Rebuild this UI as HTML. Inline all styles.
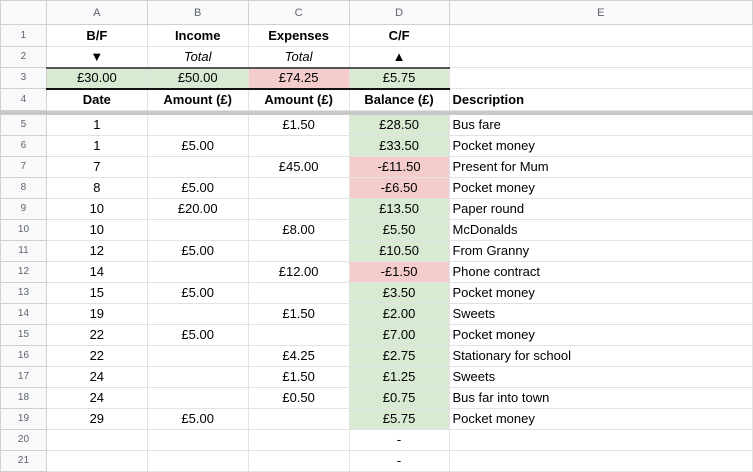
<!DOCTYPE html>
<html><head><style>
*{margin:0;padding:0;box-sizing:border-box}
body{width:753px;height:471px;overflow:hidden;background:#fff;font-family:"Liberation Sans",Arial,sans-serif}
table{border-collapse:collapse;table-layout:fixed;position:absolute;left:0;top:0}
td{border:1px solid #e2e2e2;font-size:13px;color:#000;white-space:nowrap;overflow:hidden;padding:0 3px;text-align:center;line-height:18px}
td.h{background:#f8f9fa;color:#5f6368;font-size:10px;border-color:#d0d0d0}
tr.ch td{font-size:11px;height:24px}
td.l{text-align:left}
.b{font-weight:bold}.i{font-style:italic}
.g{background:#d9ead3}.r{background:#f4cccc}
tr.r3 td.x{border-top:2px solid #555;border-bottom:2px solid #111}
tr.sep td{height:4px;padding:0;background:#c8c8c8;border-color:#c8c8c8}
tr.n td{height:21px}
</style></head><body>
<table>
<colgroup><col style="width:46px"><col style="width:101px"><col style="width:101px"><col style="width:101px"><col style="width:100px"><col style="width:304px"></colgroup>
<tr class="ch"><td class="h"></td><td class="h">A</td><td class="h">B</td><td class="h">C</td><td class="h">D</td><td class="h">E</td></tr>
<tr style="height:22px"><td class="h">1</td><td class="b">B/F</td><td class="b">Income</td><td class="b">Expenses</td><td class="b">C/F</td><td></td></tr>
<tr style="height:21px"><td class="h">2</td><td>▼</td><td class="i">Total</td><td class="i">Total</td><td>▲</td><td></td></tr>
<tr class="r3" style="height:21px"><td class="h">3</td><td class="x g">£30.00</td><td class="x g">£50.00</td><td class="x r">£74.25</td><td class="x g">£5.75</td><td></td></tr>
<tr style="height:22px"><td class="h">4</td><td class="b">Date</td><td class="b">Amount (£)</td><td class="b">Amount (£)</td><td class="b">Balance (£)</td><td class="l b">Description</td></tr>
<tr class="sep"><td></td><td></td><td></td><td></td><td></td><td></td></tr>
<tr class="n"><td class="h">5</td><td>1</td><td></td><td>£1.50</td><td class="g">£28.50</td><td class="l">Bus fare</td></tr>
<tr class="n"><td class="h">6</td><td>1</td><td>£5.00</td><td></td><td class="g">£33.50</td><td class="l">Pocket money</td></tr>
<tr class="n"><td class="h">7</td><td>7</td><td></td><td>£45.00</td><td class="r">-£11.50</td><td class="l">Present for Mum</td></tr>
<tr class="n"><td class="h">8</td><td>8</td><td>£5.00</td><td></td><td class="r">-£6.50</td><td class="l">Pocket money</td></tr>
<tr class="n"><td class="h">9</td><td>10</td><td>£20.00</td><td></td><td class="g">£13.50</td><td class="l">Paper round</td></tr>
<tr class="n"><td class="h">10</td><td>10</td><td></td><td>£8.00</td><td class="g">£5.50</td><td class="l">McDonalds</td></tr>
<tr class="n"><td class="h">11</td><td>12</td><td>£5.00</td><td></td><td class="g">£10.50</td><td class="l">From Granny</td></tr>
<tr class="n"><td class="h">12</td><td>14</td><td></td><td>£12.00</td><td class="r">-£1.50</td><td class="l">Phone contract</td></tr>
<tr class="n"><td class="h">13</td><td>15</td><td>£5.00</td><td></td><td class="g">£3.50</td><td class="l">Pocket money</td></tr>
<tr class="n"><td class="h">14</td><td>19</td><td></td><td>£1.50</td><td class="g">£2.00</td><td class="l">Sweets</td></tr>
<tr class="n"><td class="h">15</td><td>22</td><td>£5.00</td><td></td><td class="g">£7.00</td><td class="l">Pocket money</td></tr>
<tr class="n"><td class="h">16</td><td>22</td><td></td><td>£4.25</td><td class="g">£2.75</td><td class="l">Stationary for school</td></tr>
<tr class="n"><td class="h">17</td><td>24</td><td></td><td>£1.50</td><td class="g">£1.25</td><td class="l">Sweets</td></tr>
<tr class="n"><td class="h">18</td><td>24</td><td></td><td>£0.50</td><td class="g">£0.75</td><td class="l">Bus far into town</td></tr>
<tr class="n"><td class="h">19</td><td>29</td><td>£5.00</td><td></td><td class="g">£5.75</td><td class="l">Pocket money</td></tr>
<tr class="n"><td class="h">20</td><td></td><td></td><td></td><td>-</td><td></td></tr>
<tr class="n"><td class="h">21</td><td></td><td></td><td></td><td>-</td><td></td></tr>
</table>
</body></html>
